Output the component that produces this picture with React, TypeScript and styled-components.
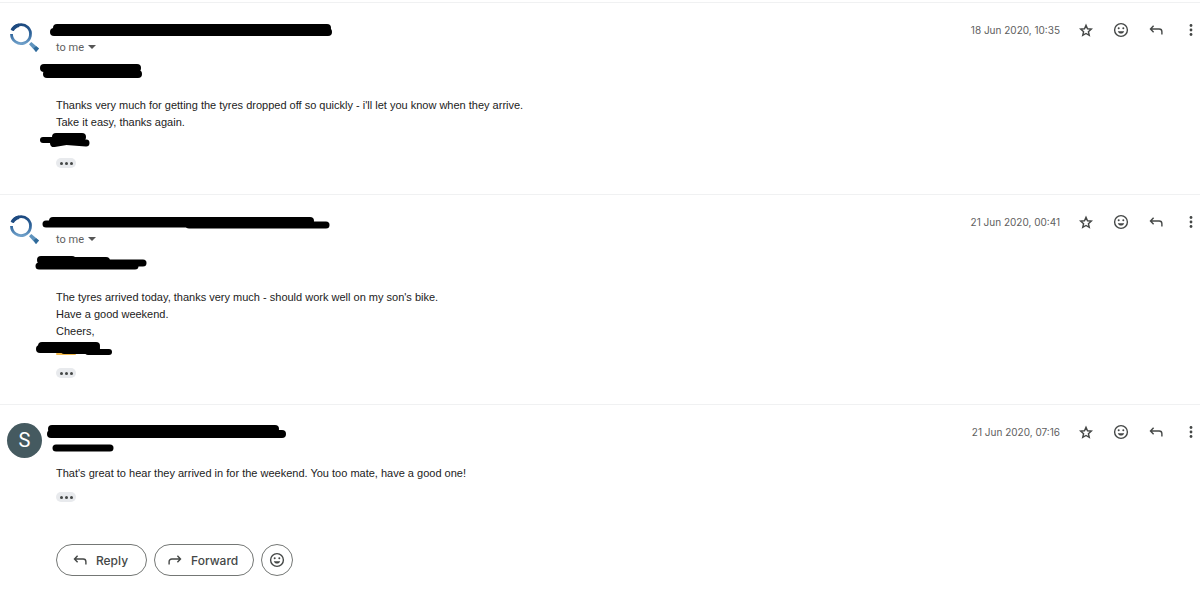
import React from "react";
import styled, { createGlobalStyle } from "styled-components";

const GlobalStyle = createGlobalStyle`
  *, *::before, *::after { box-sizing: border-box; }
  body {
    margin: 0;
    background: #fff;
    color: #222;
    font-family: "Liberation Sans", Arial, sans-serif;
    font-size: 11px;
    line-height: 17px;
  }
  button { font: inherit; color: inherit; cursor: pointer; }
`;

const Thread = styled.main`
  padding-top: 2px;
`;

const Message = styled.article`
  display: flex;
  align-items: flex-start;
  gap: 14px;
  border-top: 1px solid #f0f1f2;
  padding: 18px 0 26px 7px;
`;

const AvatarBox = styled.div`
  flex: none;
  width: 35px;
  height: 35px;
`;

const Initial = styled(AvatarBox)`
  display: flex;
  align-items: center;
  justify-content: center;
  border-radius: 50%;
  background: #455a60;
  color: #fff;
  font-family: Roboto, sans-serif;
  font-size: 20px;
`;

const Content = styled.div`
  flex: 1;
  min-width: 0;
`;

const Header = styled.header`
  display: flex;
  justify-content: space-between;
  align-items: flex-start;
`;

const Recipient = styled.button`
  display: flex;
  align-items: center;
  gap: 4px;
  height: 14px;
  padding: 0;
  border: 0;
  background: none;
  color: #5e5e5e;
  font-family: Roboto, sans-serif;
`;

const Caret = styled.span`
  border: 4px solid transparent;
  border-top-color: #555;
  border-bottom: 0;
`;

const Actions = styled.div`
  display: flex;
  align-items: center;
  gap: 17px;
  color: #444746;
`;

const Sent = styled.time`
  color: #5e5e5e;
  font-family: Inter, sans-serif;
  font-size: 10px;
  white-space: nowrap;
`;

const IconButton = styled.button`
  display: flex;
  width: 18px;
  height: 18px;
  padding: 0;
  border: 0;
  background: none;
`;

const Body = styled.div`
  padding-top: 9px;
`;

const Greeting = styled.div`
  padding-bottom: 17px;
`;

const Line = styled.p`
  margin: 0;
`;

const Trimmed = styled.button`
  display: flex;
  align-items: center;
  justify-content: center;
  gap: 2px;
  width: 20px;
  height: 10px;
  margin-top: 10px;
  padding: 0;
  border: 0;
  border-radius: 5px;
  background: #e8eaed;
`;

const Dot = styled.span`
  width: 3px;
  height: 3px;
  border-radius: 50%;
  background: #444746;
`;

const Replies = styled.footer`
  display: flex;
  gap: 7px;
  margin-top: 42px;
  color: #444746;
`;

const Pill = styled.button<{ $round?: boolean }>`
  display: flex;
  align-items: center;
  justify-content: center;
  gap: 7px;
  height: 32px;
  min-width: ${(p) => (p.$round ? "32px" : "91px")};
  padding: ${(p) => (p.$round ? "0" : "0 15px 0 11px")};
  border: 1px solid #747775;
  border-radius: 16px;
  background: #fff;
  font-family: Inter, sans-serif;
  font-size: 12px;
  font-weight: 500;
`;

const Marker = styled.svg`
  display: block;
  overflow: visible;
  fill: none;
  stroke: #000;
  stroke-linecap: round;
  stroke-linejoin: round;
`;

type Stroke = { d: string; w?: number; color?: string };

function Redaction({ strokes, height = 17 }: { strokes: Stroke[]; height?: number }) {
  return (
    <Marker width="280" height={height} aria-label="Redacted" role="img">
      {strokes.map((s) => (
        <path key={s.d} d={s.d} strokeWidth={s.w ?? 8} stroke={s.color} />
      ))}
    </Marker>
  );
}

const iconProps = { width: 18, height: 18, viewBox: "0 0 18 18", fill: "none", stroke: "currentColor", "aria-hidden": true } as const;

const StarIcon = () => (
  <svg {...iconProps} strokeWidth="1.4">
    <path d="M9 4.300l1.500 3.500 3.800.35-2.900 2.500.87 3.750L9 12.450l-3.270 1.950.87-3.750-2.900-2.500 3.800-.35z" />
  </svg>
);

const SmileIcon = () => (
  <svg {...iconProps} strokeWidth="1.4">
    <circle cx="9" cy="9" r="6.400" />
    <circle cx="6.700" cy="7.200" r="1" fill="currentColor" stroke="none" />
    <circle cx="11.300" cy="7.200" r="1" fill="currentColor" stroke="none" />
    <path d="M5.800 10.200h6.400c-.5 1.500-1.700 2.400-3.200 2.400s-2.700-.9-3.200-2.400z" fill="currentColor" stroke="none" />
  </svg>
);

const ReplyIcon = () => (
  <svg {...iconProps} strokeWidth="1.4">
    <path d="M6.600 4.800L3.500 8l3.100 3.200M3.700 8h8.500a2.700 2.700 0 0 1 2.700 2.700v2.800" />
  </svg>
);

const ForwardIcon = () => (
  <svg {...iconProps} strokeWidth="1.4">
    <path d="M11.400 4.800L14.500 8l-3.100 3.200M14.300 8H5.800a2.700 2.700 0 0 0-2.700 2.700v2.800" />
  </svg>
);

const MoreIcon = () => (
  <svg {...iconProps} fill="currentColor" stroke="none">
    <circle cx="9" cy="4.500" r="1.400" />
    <circle cx="9" cy="9" r="1.400" />
    <circle cx="9" cy="13.500" r="1.400" />
  </svg>
);

function LensAvatar({ id }: { id: string }) {
  return (
    <AvatarBox>
      <svg width="35" height="35" viewBox="0 0 35 35" fill="none" role="img" aria-label="Sender logo">
        <defs>
          <linearGradient id={id} x1="0" y1="0" x2="0" y2="1">
            <stop offset="0" stopColor="#1d4a80" />
            <stop offset="0.5" stopColor="#2f659c" />
            <stop offset="1" stopColor="#6e9fc9" />
          </linearGradient>
        </defs>
        <path d="M5.200 9.500A9.500 9.500 0 1 1 4.500 13" stroke={`url(#${id})`} strokeWidth="2.800" />
        <path d="M5.200 9.300A9.500 9.500 0 0 1 12 4.200" stroke="#1d4a80" strokeWidth="3.600" />
        <path d="M22 23.300L24.300 21 32 27.600 29 31z" fill="#5f93bd" />
        <path d="M26.500 27.300L29.200 25.200 32 27.600 29 31z" fill="#2f6a99" />
      </svg>
    </AvatarBox>
  );
}

type Mail = {
  date: string;
  initial?: string;
  name: Stroke[];
  recipient?: Stroke[];
  greeting?: Stroke[];
  lines: string[];
  signature?: Stroke[];
  signatureHeight?: number;
};

const mails: Mail[] = [
  {
    date: "18 Jun 2020, 10:35",
    name: [{ d: "M1 7H271" }, { d: "M-2 11H272" }],
    greeting: [{ d: "M-12 5H81" }, { d: "M-9 11H82" }],
    lines: [
      "Thanks very much for getting the tyres dropped off so quickly - i'll let you know when they arrive.",
      "Take it easy, thanks again.",
    ],
    signature: [{ d: "M-13 9H0", w: 6 }, { d: "M0 6H26" }, { d: "M-2 12L10 10H18" }, { d: "M4 10L30 12", w: 7 }],
  },
  {
    date: "21 Jun 2020, 00:41",
    name: [{ d: "M-3 8H254" }, { d: "M-10 11H140", w: 7 }, { d: "M133 12H270", w: 7 }],
    greeting: [{ d: "M-15 5H16" }, { d: "M-12 6H50" }, { d: "M40 8H87", w: 7 }, { d: "M-17 11H79", w: 7 }],
    lines: ["The tyres arrived today, thanks very much - should work well on my son's bike.", "Have a good weekend.", "Cheers,"],
    signature: [
      { d: "M1 14H19", w: 2, color: "#f3b94a" },
      { d: "M-14 6H40" },
      { d: "M-16 9H40" },
      { d: "M8 11H34", w: 6 },
      { d: "M32 12H53", w: 6 },
    ],
    signatureHeight: 18,
  },
  {
    date: "21 Jun 2020, 07:16",
    initial: "S",
    name: [{ d: "M-4 6H219" }, { d: "M-5 11H226" }],
    recipient: [{ d: "M0 6H54", w: 7 }],
    lines: ["That's great to hear they arrived in for the weekend. You too mate, have a good one!"],
  },
];

export default function App() {
  return (
    <>
      <GlobalStyle />
      <Thread>
        {mails.map((m, i) => (
          <Message key={m.date}>
            {m.initial ? <Initial>{m.initial}</Initial> : <LensAvatar id={`lens${i}`} />}
            <Content>
              <Header>
                <div>
                  <Redaction strokes={m.name} height={19} />
                  {m.recipient ? (
                    <Redaction strokes={m.recipient} height={14} />
                  ) : (
                    <Recipient>
                      to me
                      <Caret />
                    </Recipient>
                  )}
                </div>
                <Actions>
                  <Sent>{m.date}</Sent>
                  <IconButton aria-label="Star"><StarIcon /></IconButton>
                  <IconButton aria-label="Add reaction"><SmileIcon /></IconButton>
                  <IconButton aria-label="Reply"><ReplyIcon /></IconButton>
                  <IconButton aria-label="More"><MoreIcon /></IconButton>
                </Actions>
              </Header>
              <Body>
                {m.greeting && (
                  <Greeting>
                    <Redaction strokes={m.greeting} />
                  </Greeting>
                )}
                {m.lines.map((line) => (
                  <Line key={line}>{line}</Line>
                ))}
                {m.signature && <Redaction strokes={m.signature} height={m.signatureHeight} />}
                <Trimmed aria-label="Show trimmed content">
                  <Dot />
                  <Dot />
                  <Dot />
                </Trimmed>
              </Body>
              {i === mails.length - 1 && (
                <Replies>
                  <Pill><ReplyIcon />Reply</Pill>
                  <Pill><ForwardIcon />Forward</Pill>
                  <Pill $round aria-label="Add reaction"><SmileIcon /></Pill>
                </Replies>
              )}
            </Content>
          </Message>
        ))}
      </Thread>
    </>
  );
}
